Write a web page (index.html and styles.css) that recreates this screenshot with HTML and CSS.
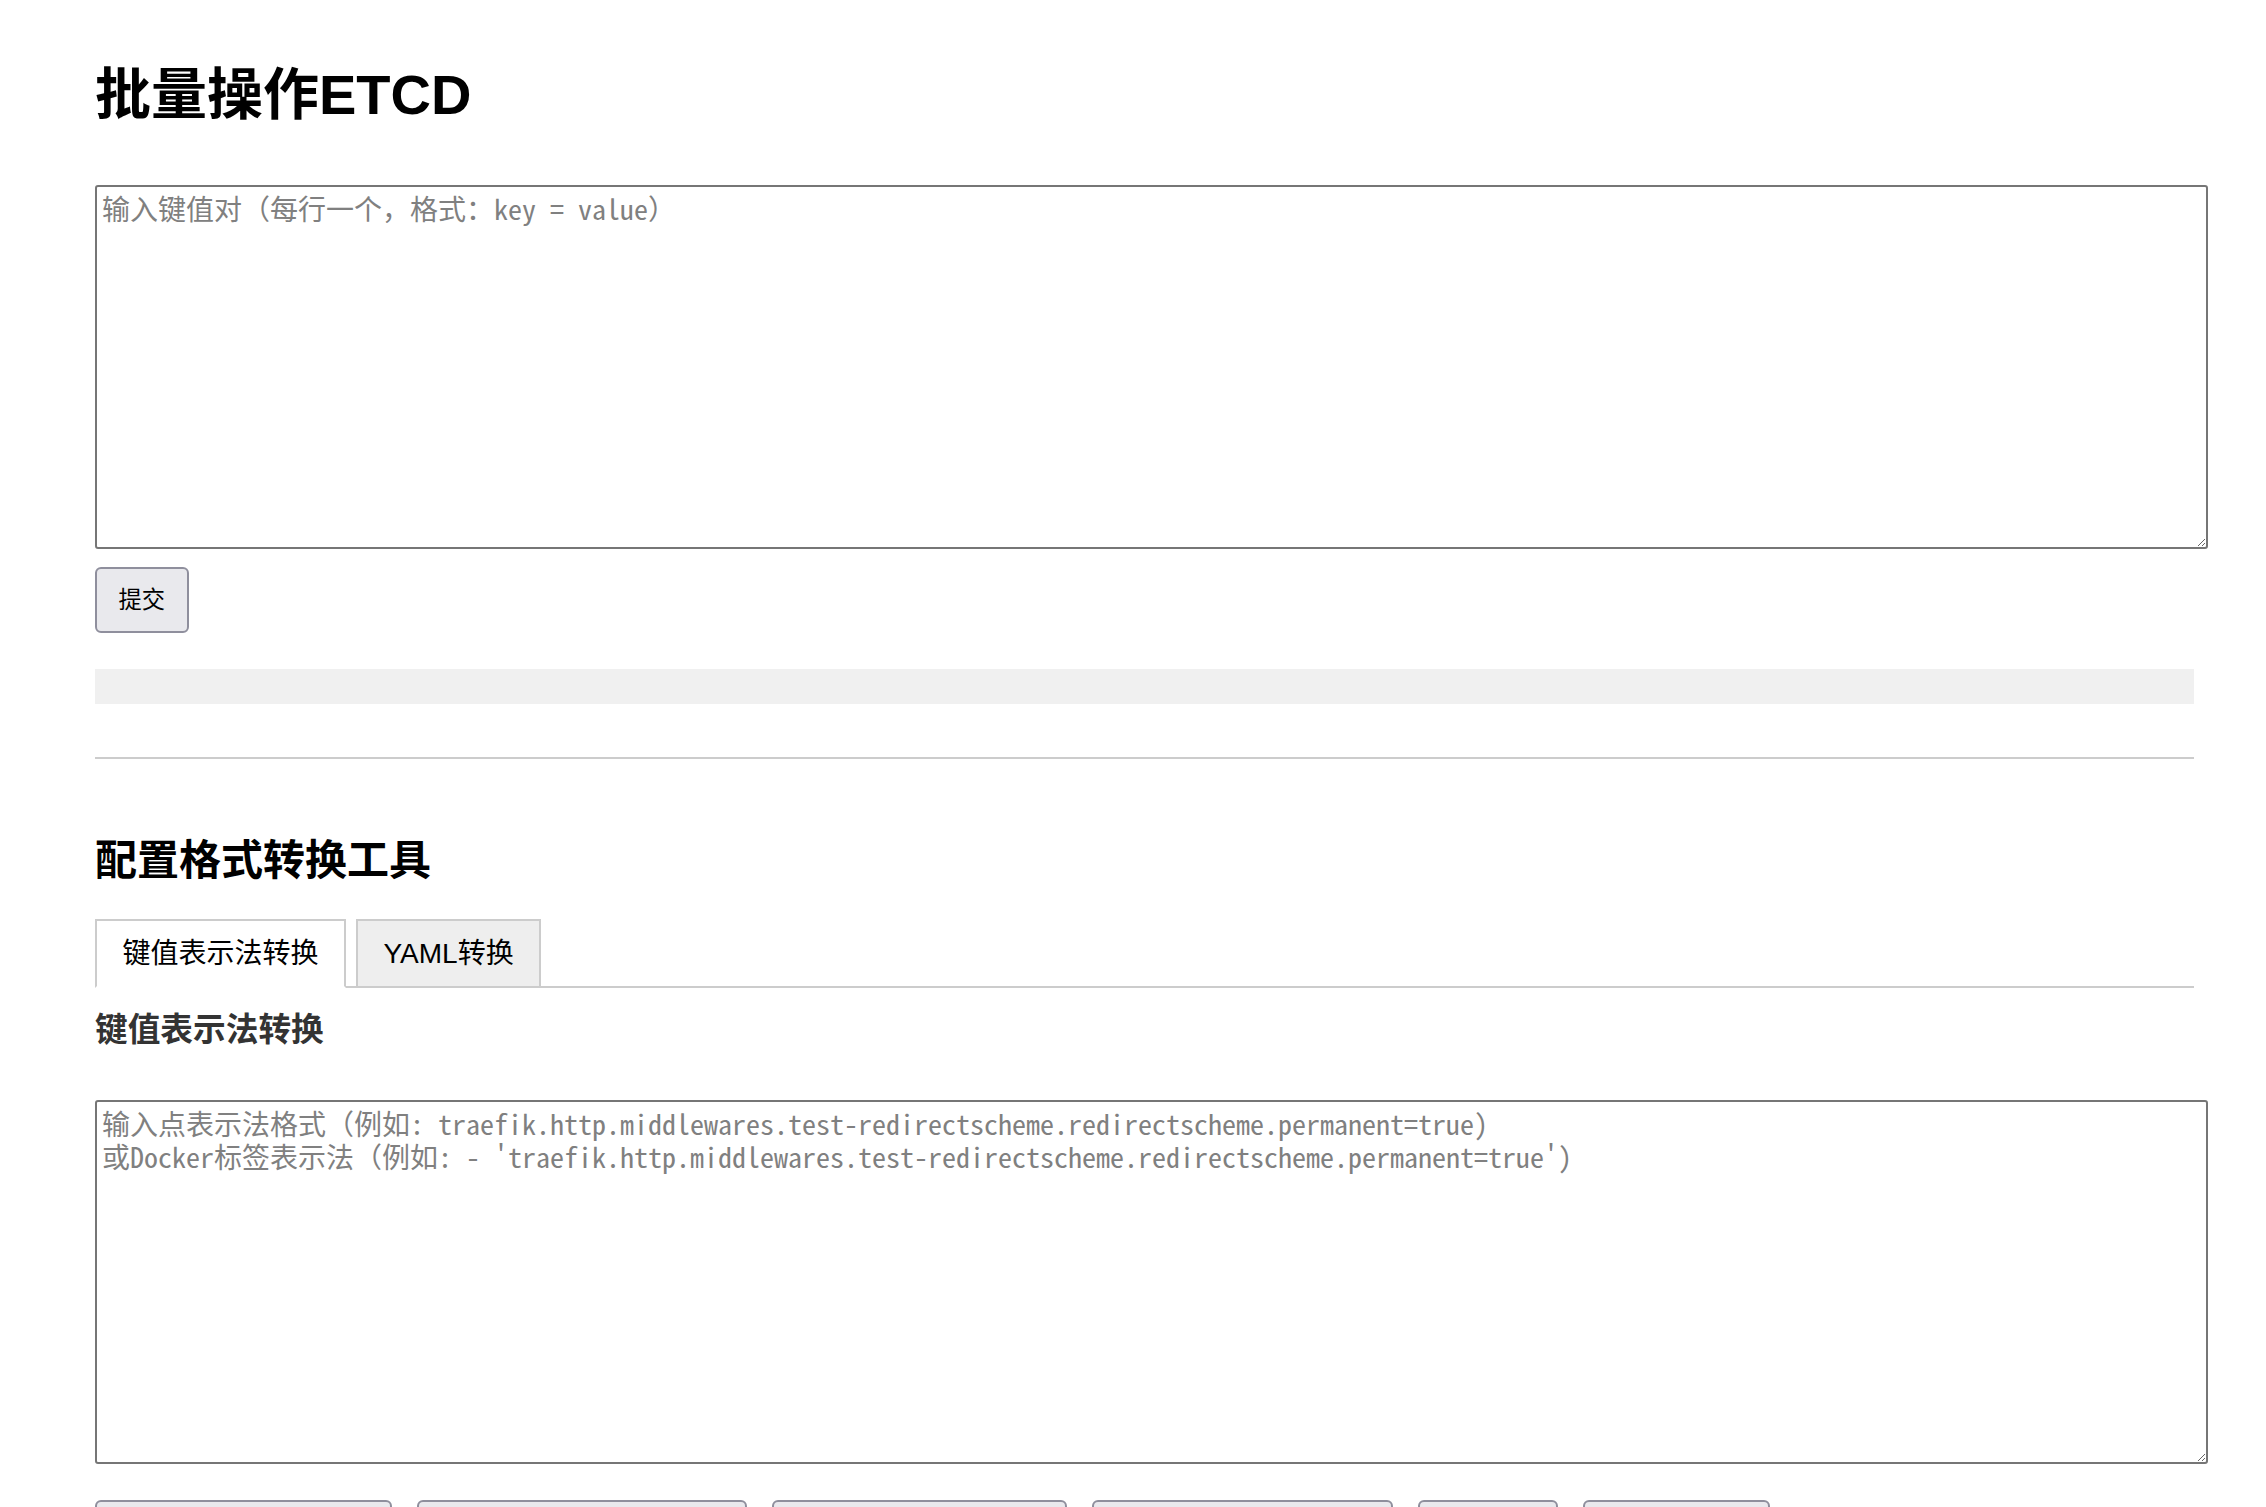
FILE: index.html
```html
<!DOCTYPE html>
<html lang="zh-CN">
<head>
<meta charset="utf-8">
<title>批量操作ETCD</title>
<link rel="stylesheet" href="styles.css">
</head>
<body>
<div class="page">
  <h1 class="title">批量操作ETCD</h1>
  <textarea class="editor" placeholder="输入键值对（每行一个，格式：key = value）"></textarea>
  <button class="btn">提交</button>
  <div class="result"></div>
  <hr class="divider">
  <h2 class="subtitle">配置格式转换工具</h2>
  <div class="tabs">
    <button class="tab active">键值表示法转换</button>
    <button class="tab">YAML转换</button>
  </div>
  <h3 class="section-title">键值表示法转换</h3>
  <textarea class="editor" placeholder="输入点表示法格式（例如: traefik.http.middlewares.test-redirectscheme.redirectscheme.permanent=true)&#10;或Docker标签表示法（例如: - 'traefik.http.middlewares.test-redirectscheme.redirectscheme.permanent=true')"></textarea>
  <div class="actions">
    <button class="btn">转换为 Docker 标签格式</button>
    <button class="btn">Docker标签转换为点表示法</button>
    <button class="btn">键值表示法转换为YAML</button>
    <button class="btn">YAML 转换为键值表示法</button>
    <button class="btn">复制结果</button>
    <button class="btn">清空全部内容</button>
  </div>
</div>
</body>
</html>
```

FILE: styles.css
```css
html, body {
  margin: 0;
  padding: 0;
  background: #ffffff;
}

body {
  font-family: "Liberation Sans", "Noto Sans CJK SC", sans-serif;
  color: #000;
}

.page {
  width: 2099px;
  padding: 0 0 40px 95px;
}

.title {
  margin: 63px 0 58px;
  font-size: 56px;
  line-height: 64px;
  font-weight: bold;
}

.editor {
  display: block;
  box-sizing: content-box;
  width: 100%;
  height: 350px;
  margin: 0;
  padding: 5px;
  border: 2px solid #767676;
  border-radius: 3px;
  font-family: "Noto Sans Mono CJK SC", "Liberation Mono", monospace;
  font-size: 28px;
  line-height: 33px;
  color: #000;
  background: #fff;
  resize: both;
}

.editor::placeholder {
  color: #808080;
}

.btn {
  box-sizing: border-box;
  height: 66px;
  padding: 0 21.5px;
  margin: 18px 0 0;
  font-family: "Liberation Sans", "Noto Sans CJK SC", sans-serif;
  font-size: 23.3px;
  line-height: 30px;
  color: #000;
  background: #e9e9ed;
  border: 2px solid #8f8f9d;
  border-radius: 6px;
  white-space: nowrap;
}

.result {
  height: 35px;
  margin-top: 36px;
  background: #f0f0f0;
}

.divider {
  margin: 53px 0 0;
  height: 0;
  border: 0;
  border-top: 2px solid #cccccc;
}

.subtitle {
  margin: 77px 0 33px;
  font-size: 42px;
  line-height: 50px;
  font-weight: bold;
}

.tabs {
  display: flex;
  gap: 10px;
  border-bottom: 2px solid #cccccc;
}

.tab {
  margin: 0 0 -2px;
  padding: 17px 25.5px 16px;
  font-family: "Liberation Sans", "Noto Sans CJK SC", sans-serif;
  font-size: 28px;
  line-height: 32px;
  color: #000;
  background: #eeeeee;
  border: 2px solid #cccccc;
  border-radius: 0;
}

.tab.active {
  background: #ffffff;
  border-bottom-color: #ffffff;
}

.section-title {
  margin: 22px 0 50px;
  font-size: 32.7px;
  line-height: 40px;
  font-weight: bold;
  color: #333333;
}

.actions {
  display: flex;
  gap: 25px;
  margin-top: 36px;
}

.actions .btn {
  margin: 0;
}
```
